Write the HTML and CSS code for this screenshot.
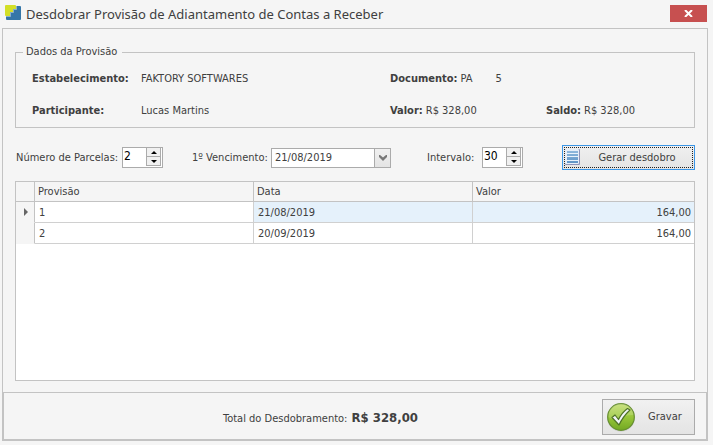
FILE: index.html
```html
<!DOCTYPE html>
<html lang="pt-BR">
<head>
<meta charset="utf-8">
<title>Desdobrar Provisão de Adiantamento de Contas a Receber</title>
<link rel="stylesheet" href="styles.css">
</head>
<body>
<div class="window">
  <header class="titlebar">
    <svg class="logo" width="16" height="16" viewBox="0 0 16 16" aria-hidden="true">
      <path d="M11 1V4H8V7H5V10H1V14Q1 15 2 15H15Q16 15 16 14V2Q16 1 15 1Z" fill="#3576a8"/>
      <path d="M0 1Q0 0 1 0H10Q11 0 11 1V4H8V7H5V11H1Q0 11 0 10Z" fill="#d3df26"/>
      <path d="M11.500 1V4.500H8.500V7.500H5.500V11.500H1" fill="none" stroke="#dfeaf0" stroke-opacity=".5"/>
    </svg>
    <h1 class="title">Desdobrar Provisão de Adiantamento de Contas a Receber</h1>
    <button class="close" type="button" aria-label="Fechar">
      <svg width="9" height="7" viewBox="0 0 9 7" aria-hidden="true"><path d="M1 0L8 7M8 0L1 7" stroke="#fff" stroke-width="2"/></svg>
    </button>
  </header>

  <form class="frame">
    <main class="content">
      <fieldset class="group">
        <legend>Dados da Provisão</legend>
        <dl class="facts">
          <div class="fact fact-wide"><dt>Estabelecimento:</dt><dd>FAKTORY SOFTWARES</dd></div>
          <div class="fact fact-rest"><dt>Documento:</dt><dd class="doc"><span>PA</span><span>5</span></dd></div>
          <div class="fact fact-wide"><dt>Participante:</dt><dd>Lucas Martins</dd></div>
          <div class="fact"><dt>Valor:</dt><dd>R$ 328,00</dd></div>
          <div class="fact"><dt>Saldo:</dt><dd>R$ 328,00</dd></div>
        </dl>
      </fieldset>

      <div class="controls">
        <label class="field field-count" for="parcelas">Número de Parcelas:</label>
        <span class="spinner">
          <input id="parcelas" type="text" inputmode="numeric" value="2">
          <span class="steps">
            <button type="button" aria-label="Aumentar parcelas"><svg width="6" height="3" viewBox="0 0 6 3"><path d="M3 0L6 3H0Z"/></svg></button>
            <button type="button" aria-label="Diminuir parcelas"><svg width="6" height="3" viewBox="0 0 6 3"><path d="M0 0H6L3 3Z"/></svg></button>
          </span>
        </span>
        <label class="field field-date" for="vencimento">1º Vencimento:</label>
        <span class="datebox">
          <input id="vencimento" type="text" value="21/08/2019">
          <button type="button" aria-label="Abrir calendário"><svg width="8" height="6" viewBox="0 0 8 6"><path d="M0 0H1L4 2.500L7 0H8V2L4 6L0 2Z" fill="#777"/></svg></button>
        </span>
        <label class="field field-interval" for="intervalo">Intervalo:</label>
        <span class="spinner">
          <input id="intervalo" type="text" inputmode="numeric" value="30">
          <span class="steps">
            <button type="button" aria-label="Aumentar intervalo"><svg width="6" height="3" viewBox="0 0 6 3"><path d="M3 0L6 3H0Z"/></svg></button>
            <button type="button" aria-label="Diminuir intervalo"><svg width="6" height="3" viewBox="0 0 6 3"><path d="M0 0H6L3 3Z"/></svg></button>
          </span>
        </span>
        <button class="split" type="button">
          <svg width="15" height="16" viewBox="0 0 15 16" aria-hidden="true">
            <defs><linearGradient id="sheet" x2="0" y2="1"><stop stop-color="#8fb8dc"/><stop offset="1" stop-color="#5f94c6"/></linearGradient></defs>
            <rect x="0" y="0" width="15" height="16" rx="1" fill="#8f93b8"/>
            <rect x="0" y="0" width="14" height="15" rx="1" fill="#e6eef8"/>
            <rect x="2" y="2" width="11" height="12" fill="url(#sheet)"/>
            <path d="M2 4.500H13M2 7.500H13M2 11.500H13" stroke="#e8f2fb"/>
          </svg>
          <span>Gerar desdobro</span>
        </button>
      </div>

      <div class="grid">
        <table>
          <colgroup><col class="marker"><col class="data"><col class="data"><col></colgroup>
          <thead>
            <tr><th></th><th scope="col">Provisão</th><th scope="col">Data</th><th scope="col">Valor</th></tr>
          </thead>
          <tbody>
            <tr class="current"><td class="mark"><svg width="4" height="8" viewBox="0 0 4 8" aria-hidden="true"><path d="M0 0L4 4L0 8Z" fill="#666"/></svg></td><td>1</td><td>21/08/2019</td><td class="amount">164,00</td></tr>
            <tr><td class="mark"></td><td>2</td><td>20/09/2019</td><td class="amount">164,00</td></tr>
          </tbody>
        </table>
      </div>
    </main>

    <footer class="footer">
      <p class="total">Total do Desdobramento: <strong>R$ 328,00</strong></p>
      <button class="save" type="submit">
        <svg width="30" height="30" viewBox="0 0 30 30" aria-hidden="true">
          <defs><linearGradient id="green" x2="0" y2="1"><stop stop-color="#c0dc68"/><stop offset=".5" stop-color="#98c63a"/><stop offset="1" stop-color="#72a822"/></linearGradient></defs>
          <circle cx="15" cy="15.500" r="14" fill="#9a9a9a" opacity=".35"/>
          <circle cx="15" cy="15" r="13.300" fill="url(#green)" stroke="#668f30" stroke-width="1.200"/>
          <path d="M2.500 15A12.500 12.500 0 0 1 27.500 13Q17 13 10 17Q6 18 2.500 15Z" fill="#fff" opacity=".16"/>
          <path d="M6 15.500L9 13L12.500 17.500Q16 10.500 21.500 6.500L24 8Q17 14.500 13 23Z" fill="#f2f5fa" stroke="#4f7326" stroke-width="1.200" stroke-linejoin="round"/>
        </svg>
        <span>Gravar</span>
      </button>
    </footer>
  </form>
</div>
</body>
</html>
```
FILE: styles.css
```css
* { box-sizing: border-box; }

body {
  margin: 0;
  background: #f5f5f5;
  color: #404040;
  font: 11px/14px "DejaVu Sans Condensed", "DejaVu Sans", sans-serif;
}

button, input {
  margin: 0;
  padding: 0;
  border: 0;
  border-radius: 0;
  background: none;
  color: inherit;
  font: inherit;
}

svg { display: block; flex: none; }

.window {
  display: flex;
  flex-direction: column;
  min-height: 100vh;
  padding: 0 5px 4px 2px;
}

.titlebar {
  display: flex;
  align-items: center;
  height: 28px;
  padding: 0 1px 2px 3px;
}

.title {
  flex: 1;
  margin: 0 0 0 5px;
  padding-top: 2px;
  font-family: "Noto Sans", sans-serif;
  font-size: 13px;
  font-weight: normal;
  line-height: 18px;
}

.close {
  display: grid;
  place-items: center;
  width: 37px;
  height: 17px;
  background: #c75050;
}

.frame {
  display: flex;
  flex: 1;
  flex-direction: column;
}

.content {
  display: flex;
  flex: 1;
  flex-direction: column;
  padding: 16px 12px 11px;
  border: 1px solid #c3c3c3;
  border-bottom: 0;
}

.group {
  min-width: 0;
  margin: 0;
  padding: 0 16px 9px;
  border: 1px solid #c3c3c3;
}

.group legend {
  margin-left: -9px;
  padding: 0 5px 0 3px;
}

.facts {
  display: grid;
  grid-template-columns: 358px 156px 1fr;
  row-gap: 18px;
  margin: 13px 0 0;
}

.fact { display: flex; gap: 3px; }
.fact-wide { gap: 0; }
.fact-wide dt { width: 109px; }
.fact-rest { grid-column: span 2; }
.facts dt { font-weight: bold; }
.facts dd { margin: 0; }
.doc { display: flex; gap: 23px; }

.controls {
  display: flex;
  align-items: center;
  height: 25px;
  margin: 17px 0 11px;
}

.field { padding-top: 1px; white-space: nowrap; }
.field-count { width: 107px; padding-left: 1px; }
.field-date { width: 108px; padding-left: 29px; }
.field-interval { width: 91px; padding-left: 36px; }

.spinner {
  display: flex;
  width: 41px;
  height: 21px;
  border: 1px solid #ababab;
  background: #fff;
}

.spinner input {
  flex: 1;
  width: 0;
  padding: 0 0 3px 1px;
  color: #000;
  font-size: 12px;
}

.steps {
  display: flex;
  flex-direction: column;
  width: 15px;
  height: 18px;
  margin-right: 1px;
}

.steps button {
  display: grid;
  flex: 1;
  place-items: center;
  border: 1px solid #ababab;
  border-top: 0;
  background: #f0f0f0;
}

.datebox {
  display: flex;
  width: 120px;
  height: 20px;
  border: 1px solid #ababab;
  background: #fff;
}

.datebox input { flex: 1; width: 0; padding-left: 3px; }

.datebox button {
  display: grid;
  place-items: center;
  width: 16px;
  border-left: 1px solid #ababab;
  background: linear-gradient(#f0f0f0, #e4e4e4);
}

.split {
  display: flex;
  align-items: center;
  width: 133px;
  height: 25px;
  margin-left: auto;
  padding: 0 0 2px 2px;
  border: 1px solid #3c96e6;
  outline: 1px dotted #222;
  outline-offset: -3px;
  background: linear-gradient(#f0f0f0, #e4e4e4);
}

.split span { flex: 1; padding-top: 3px; text-align: center; }

.grid {
  flex: 1;
  border: 1px solid #c3c3c3;
  background: #fff;
}

table {
  width: 100%;
  table-layout: fixed;
  border-collapse: separate;
  border-spacing: 0;
}

.marker { width: 19px; }
.data { width: 32.3%; }

th, td {
  height: 21px;
  padding: 1px 3px 0 4px;
  border-right: 1px solid #d0d0d0;
  border-bottom: 1px solid #d0d0d0;
  line-height: 19px;
}

th {
  height: 20px;
  padding: 0 3px;
  border-color: #c3c3c3;
  background: #f5f5f5;
  font-weight: normal;
  text-align: left;
}

th:last-child, td:last-child { border-right: 0; }

.mark {
  padding: 0 0 0 8px;
  border-right-color: #c3c3c3;
  border-bottom-color: #f5f5f5;
  background: #f5f5f5;
}

.current td:nth-child(n+3) { background: #e5f1fb; }
.amount { text-align: right; }

.footer {
  display: flex;
  align-items: center;
  padding: 6px 11px 4px 12px;
  border: 2px solid #c3c3c3;
  border-top-width: 1px;
}

.total { flex: 1; margin: 2px 0 0 207px; }

.total strong { margin-left: 1px; font-size: 13px; }

.save {
  display: flex;
  align-items: center;
  width: 93px;
  height: 36px;
  padding-left: 3px;
  border: 1px solid #ababab;
  background: linear-gradient(#f1f1f1, #e4e4e4);
}

.save span { margin-left: 12px; }
```
